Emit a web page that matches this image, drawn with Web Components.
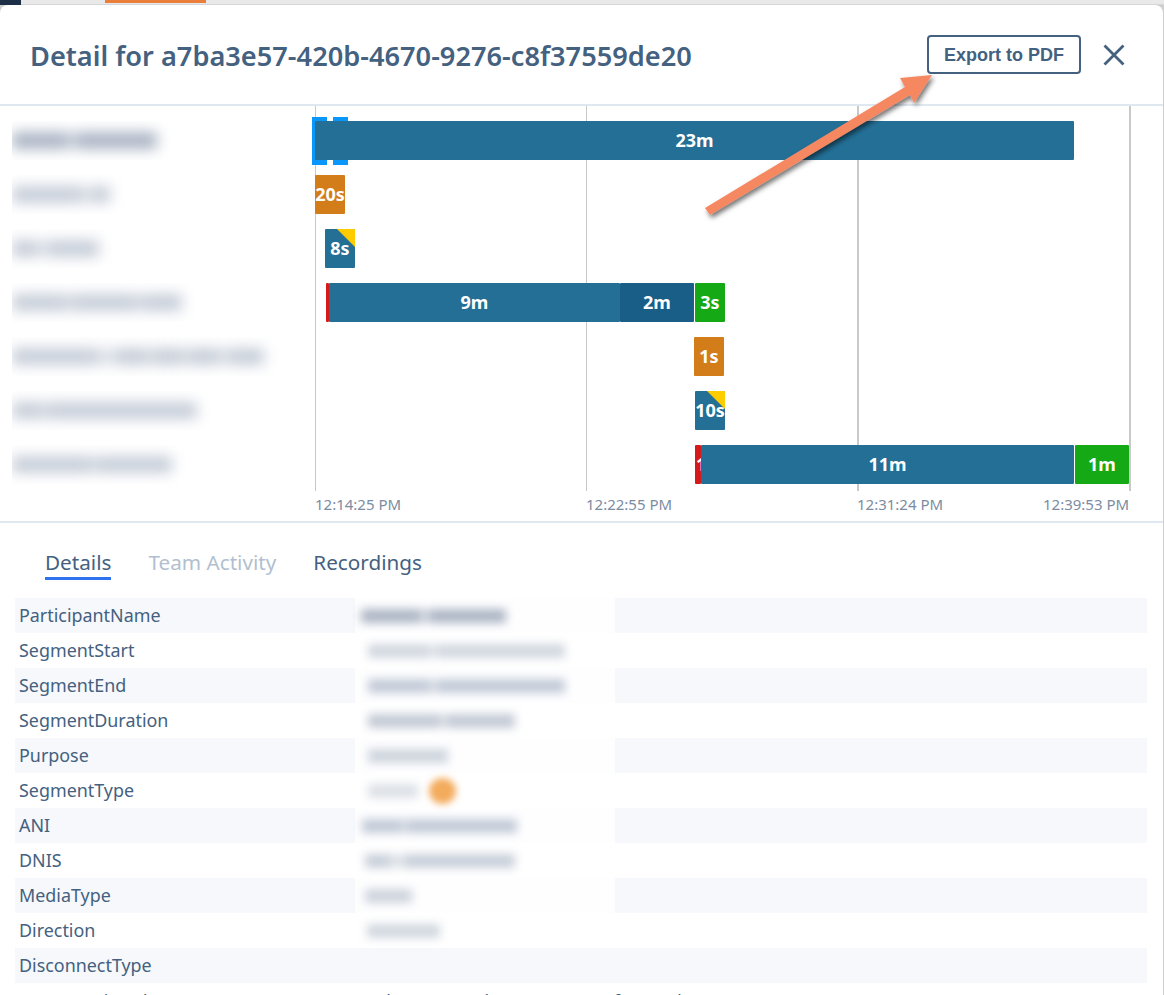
<!DOCTYPE html>
<html>
<head>
<meta charset="utf-8">
<style>
  html, body { margin: 0; height: 995px; overflow: hidden; background: #cfcfcf; }
</style>
</head>
<body>
<detail-modal>
  <chart-panel slot="chart"></chart-panel>
  <detail-table slot="table"></detail-table>
</detail-modal>

<template id="modal-tpl">
  <style>
    :host { display: block; font-family: "Noto Sans", "Open Sans", sans-serif; color: #44617f; }
    .backdrop { display: flex; height: 5px; box-sizing: border-box; background: #e9e9e9; border-bottom: 1px solid #d6d6d6; align-items: flex-start; }
    .backdrop .nav { width: 21px; height: 5px; background: #1d2f47; }
    .backdrop .tag { width: 101px; height: 3px; margin-left: 84px; background: #ea7f3c; }
    .box { position: relative; background: #fff; border-radius: 8px 8px 0 0; margin-right: 1px; height: 990px; overflow: hidden; }
    header { display: flex; align-items: center; height: 99px; border-bottom: 2px solid #dfe8f1; padding: 0 37px 0 30px; }
    h1 { flex: 1; margin: 0; padding-top: 2px; font-size: 27.2px; font-weight: 600; color: #44617f; white-space: nowrap; }
    button { font: bold 18px "Liberation Sans", sans-serif; color: #44617f; background: #fff; border: 2px solid #44617f; border-radius: 4px; width: 154px; height: 39px; padding: 1px 0 0; margin-right: 21px; }
    .close { display: block; width: 24px; height: 24px; }
    .arrow { position: absolute; left: 695px; top: 65px; width: 250px; height: 160px; overflow: visible; }
  </style>
  <div class="backdrop"><div class="nav"></div><div class="tag"></div></div>
  <div class="box">
    <header>
      <h1>Detail for a7ba3e57-420b-4670-9276-c8f37559de20</h1>
      <button>Export to PDF</button>
      <svg class="close" viewBox="0 0 24 24"><path d="M2.5 2.5 L21.5 21.5 M21.5 2.5 L2.5 21.5" stroke="#44617f" stroke-width="2.8" fill="none"/></svg>
    </header>
    <slot name="chart"></slot>
    <slot name="table"></slot>
    <svg class="arrow" viewBox="0 0 250 160">
      <defs><filter id="sh" x="-20%" y="-20%" width="140%" height="140%"><feDropShadow dx="2" dy="3" stdDeviation="2.5" flood-color="#000" flood-opacity=".55"/></filter></defs>
      <path d="M10 138 L210 17 L205 8 L237 5 L219 33 L215 25 L15 145 Z" fill="#f58861" filter="url(#sh)"/>
    </svg>
  </div>
</template>

<template id="blur-tpl">
  <style>
    :host { display: flex; height: var(--tall, 14px); flex: none; filter: blur(var(--soft, 5px)); }
    i { display: block; height: 100%; background: var(--smear, #c3cad6); }
    b { display: block; background: var(--smear, #c3cad6); opacity: .6; }
  </style>
</template>

<template id="chart-tpl">
  <style>
    :host { display: block; height: 415px; border-bottom: 2px solid #dfe8f1; }
    .wrap { display: grid; grid-template-columns: 315px 1fr; height: 100%; }
    .names { display: flex; flex-direction: column; padding: 15px 0 0 12px; --smear: #c6cdd8; --soft: 7px; --tall: 17px; }
    .name { height: 39px; margin-bottom: 15px; display: flex; align-items: center; overflow: hidden; width: 290px; }
    .first { --smear: #a9b3c3; }
    .plot { position: relative; }
    .rows { display: flex; flex-direction: column; gap: 15px; padding-top: 15px; position: relative; }
    .row { display: flex; height: 39px; }
    .line { position: absolute; top: 0; height: 385px; width: 2px; background: #c9c9c9; }
    .axis { position: absolute; top: 388px; font-size: 15px; line-height: 20px; color: #7b8ca3; white-space: nowrap; }
    .handle { position: absolute; top: 11px; width: 15px; height: 48px; background: #0a97fb; }
  </style>
  <div class="wrap">
    <div class="names">
      <div class="name first"><blur-text segs="55,10,80"></blur-text></div>
      <div class="name"><blur-text segs="70,10,18"></blur-text></div>
      <div class="name"><blur-text segs="25,12,50"></blur-text></div>
      <div class="name"><blur-text segs="55,5,65,5,40"></blur-text></div>
      <div class="name"><blur-text segs="85,20,30,6,30,6,30,10,35"></blur-text></div>
      <div class="name"><blur-text segs="30,5,150"></blur-text></div>
      <div class="name"><blur-text segs="80,5,75"></blur-text></div>
    </div>
    <div class="plot">
      <div class="line" style="left:0;width:1px"></div>
      <div class="line" style="left:271px;width:1px"></div>
      <div class="line" style="left:542px"></div>
      <div class="line" style="left:814px"></div>
      <div class="handle" style="left:-3px"></div>
      <div class="handle" style="left:18px"></div>
      <div class="rows">
        <div class="row"><time-bar width="759" kind="blue" label="23m"></time-bar></div>
        <div class="row"><time-bar width="30" kind="orange" label="20s"></time-bar></div>
        <div class="row"><time-bar start="10" width="30" kind="blue" label="8s" flag></time-bar></div>
        <div class="row">
          <time-bar start="11" width="3" kind="red"></time-bar>
          <time-bar width="291" kind="blue" label="9m"></time-bar>
          <time-bar width="74" kind="dark" label="2m"></time-bar>
          <time-bar start="1" width="30" kind="green" label="3s"></time-bar>
        </div>
        <div class="row"><time-bar start="379" width="30" kind="orange" label="1s"></time-bar></div>
        <div class="row"><time-bar start="380" width="30" kind="blue" label="10s" flag></time-bar></div>
        <div class="row">
          <time-bar start="380" width="6" kind="red" label="1" clip></time-bar>
          <time-bar width="373" kind="blue" label="11m"></time-bar>
          <time-bar start="1" width="54" kind="green" label="1m"></time-bar>
        </div>
      </div>
      <div class="axis" style="left:0">12:14:25 PM</div>
      <div class="axis" style="left:271px">12:22:55 PM</div>
      <div class="axis" style="left:542px">12:31:24 PM</div>
      <div class="axis" style="left:728px">12:39:53 PM</div>
    </div>
  </div>
</template>

<template id="bar-tpl">
  <style>
    :host { display: block; flex: none; height: 39px; position: relative; overflow: hidden; border-radius: 1px; font: 700 18px/39px "Noto Sans", "Open Sans", sans-serif; color: #fff; text-align: center; white-space: nowrap; }
    :host([kind=blue]) { background: #236f96; }
    :host([kind=dark]) { background: #185e86; }
    :host([kind=orange]) { background: #d27c1a; }
    :host([kind=green]) { background: #15aa15; }
    :host([kind=red]) { background: #d41a1a; }
    .flag { display: none; position: absolute; right: 0; top: 0; width: 0; height: 0; border-style: solid; border-width: 0 18px 18px 0; border-color: transparent #ffcc00 transparent transparent; }
    :host([flag]) .flag { display: block; }
    .t { position: relative; margin: 0 -10px; display: block; }
    :host([clip]) .t { text-align: left; margin-left: 1px; }
  </style>
  <span class="flag"></span><span class="t"></span>
</template>

<template id="table-tpl">
  <style>
    :host { display: block; font-family: "Noto Sans", "Open Sans", sans-serif; }
    nav { display: flex; gap: 37px; padding: 23px 0 0 45px; height: 52px; font-size: 20.7px; line-height: 33px; }
    nav span { height: 31px; color: #44617f; }
    nav .on { border-bottom: 3px solid #2e72ee; }
    nav .off { color: #b1bfd0; }
    .rows { display: flex; flex-direction: column; margin: 0 16px 0 15px; }
  </style>
  <nav><span class="on">Details</span><span class="off">Team Activity</span><span>Recordings</span></nav>
  <div class="rows">
    <kv-row name="ParticipantName" segs="59,10,76" smear="#adb6c5"></kv-row>
    <kv-row name="SegmentStart" segs="7:62,7,128" smear="#d2d8e0"></kv-row>
    <kv-row name="SegmentEnd" segs="7:62,7,128" smear="#c2cad7"></kv-row>
    <kv-row name="SegmentDuration" segs="7:72,7,68" smear="#c3cad5"></kv-row>
    <kv-row name="Purpose" segs="7:80" smear="#ced4dd"></kv-row>
    <kv-row name="SegmentType" segs="7:50" smear="#dce0e6" dot></kv-row>
    <kv-row name="ANI" segs="1:40,5,110" smear="#c2cad7"></kv-row>
    <kv-row name="DNIS" segs="4:25,15,110" smear="#c9d0da"></kv-row>
    <kv-row name="MediaType" segs="4:47" smear="#ced4dd"></kv-row>
    <kv-row name="Direction" segs="6:73" smear="#d2d8e0"></kv-row>
    <kv-row name="DisconnectType"></kv-row>
    <kv-row name="ConversationId" value="a7ba3e57-420b-4670-9276-c8f37559de20"></kv-row>
  </div>
</template>

<template id="row-tpl">
  <style>
    :host { display: flex; height: 35px; align-items: center; font-size: 17.9px; color: #44617f; background: #fff; white-space: nowrap; }
    :host(:nth-child(odd)) { background: #f6f8fb; }
    .k { width: 340px; padding: 0 0 2px 4px; box-sizing: border-box; flex: none; }
    .v { display: flex; align-items: center; height: 100%; padding-left: 6px; box-sizing: border-box; --soft: 5px; }
    .v.masked { width: 260px; background: rgba(255,255,255,.82); }
    .v.plain { padding: 0 0 0 11px; }
    :host([value]) .k { padding: 0 0 0 4px; }
    .dot { width: 27px; height: 26px; border-radius: 50%; background: #f3ab5c; filter: blur(3.5px); margin-left: 11px; }
  </style>
  <span class="k"></span><span class="v"></span>
</template>

<script>
function shell(tplId) {
  return class extends HTMLElement {
    constructor() {
      super();
      this.attachShadow({ mode: "open" });
      this.shadowRoot.appendChild(document.getElementById(tplId).content.cloneNode(true));
    }
  };
}

class BlurText extends shell("blur-tpl") {
  connectedCallback() {
    // segs: "offset:word,gap,word,..." widths in px, redacted words
    let segs = this.getAttribute("segs") || "";
    if (segs.includes(":")) {
      const parts = segs.split(":");
      this.style.marginLeft = parts[0] + "px";
      segs = parts[1];
    }
    segs.split(",").forEach((w, i) => {
      const el = document.createElement(i % 2 ? "b" : "i");
      el.style.width = w + "px";
      this.shadowRoot.appendChild(el);
    });
  }
}

class TimeBar extends shell("bar-tpl") {
  connectedCallback() {
    this.style.width = this.getAttribute("width") + "px";
    this.style.marginLeft = (this.getAttribute("start") || 0) + "px";
    this.shadowRoot.querySelector(".t").textContent = this.getAttribute("label") || "";
  }
}

class KvRow extends shell("row-tpl") {
  connectedCallback() {
    this.shadowRoot.querySelector(".k").textContent = this.getAttribute("name");
    const v = this.shadowRoot.querySelector(".v");
    if (this.hasAttribute("value")) {
      v.classList.add("plain");
      v.textContent = this.getAttribute("value");
    } else if (this.hasAttribute("segs")) {
      v.classList.add("masked");
      const s = document.createElement("blur-text");
      s.setAttribute("segs", this.getAttribute("segs"));
      s.style.setProperty("--smear", this.getAttribute("smear"));
      v.appendChild(s);
      if (this.hasAttribute("dot")) {
        const d = document.createElement("i");
        d.className = "dot";
        v.appendChild(d);
      }
    }
  }
}

customElements.define("detail-modal", class extends shell("modal-tpl") {});
customElements.define("chart-panel", class extends shell("chart-tpl") {});
customElements.define("blur-text", BlurText);
customElements.define("time-bar", TimeBar);
customElements.define("detail-table", class extends shell("table-tpl") {});
customElements.define("kv-row", KvRow);
</script>
</body>
</html>
